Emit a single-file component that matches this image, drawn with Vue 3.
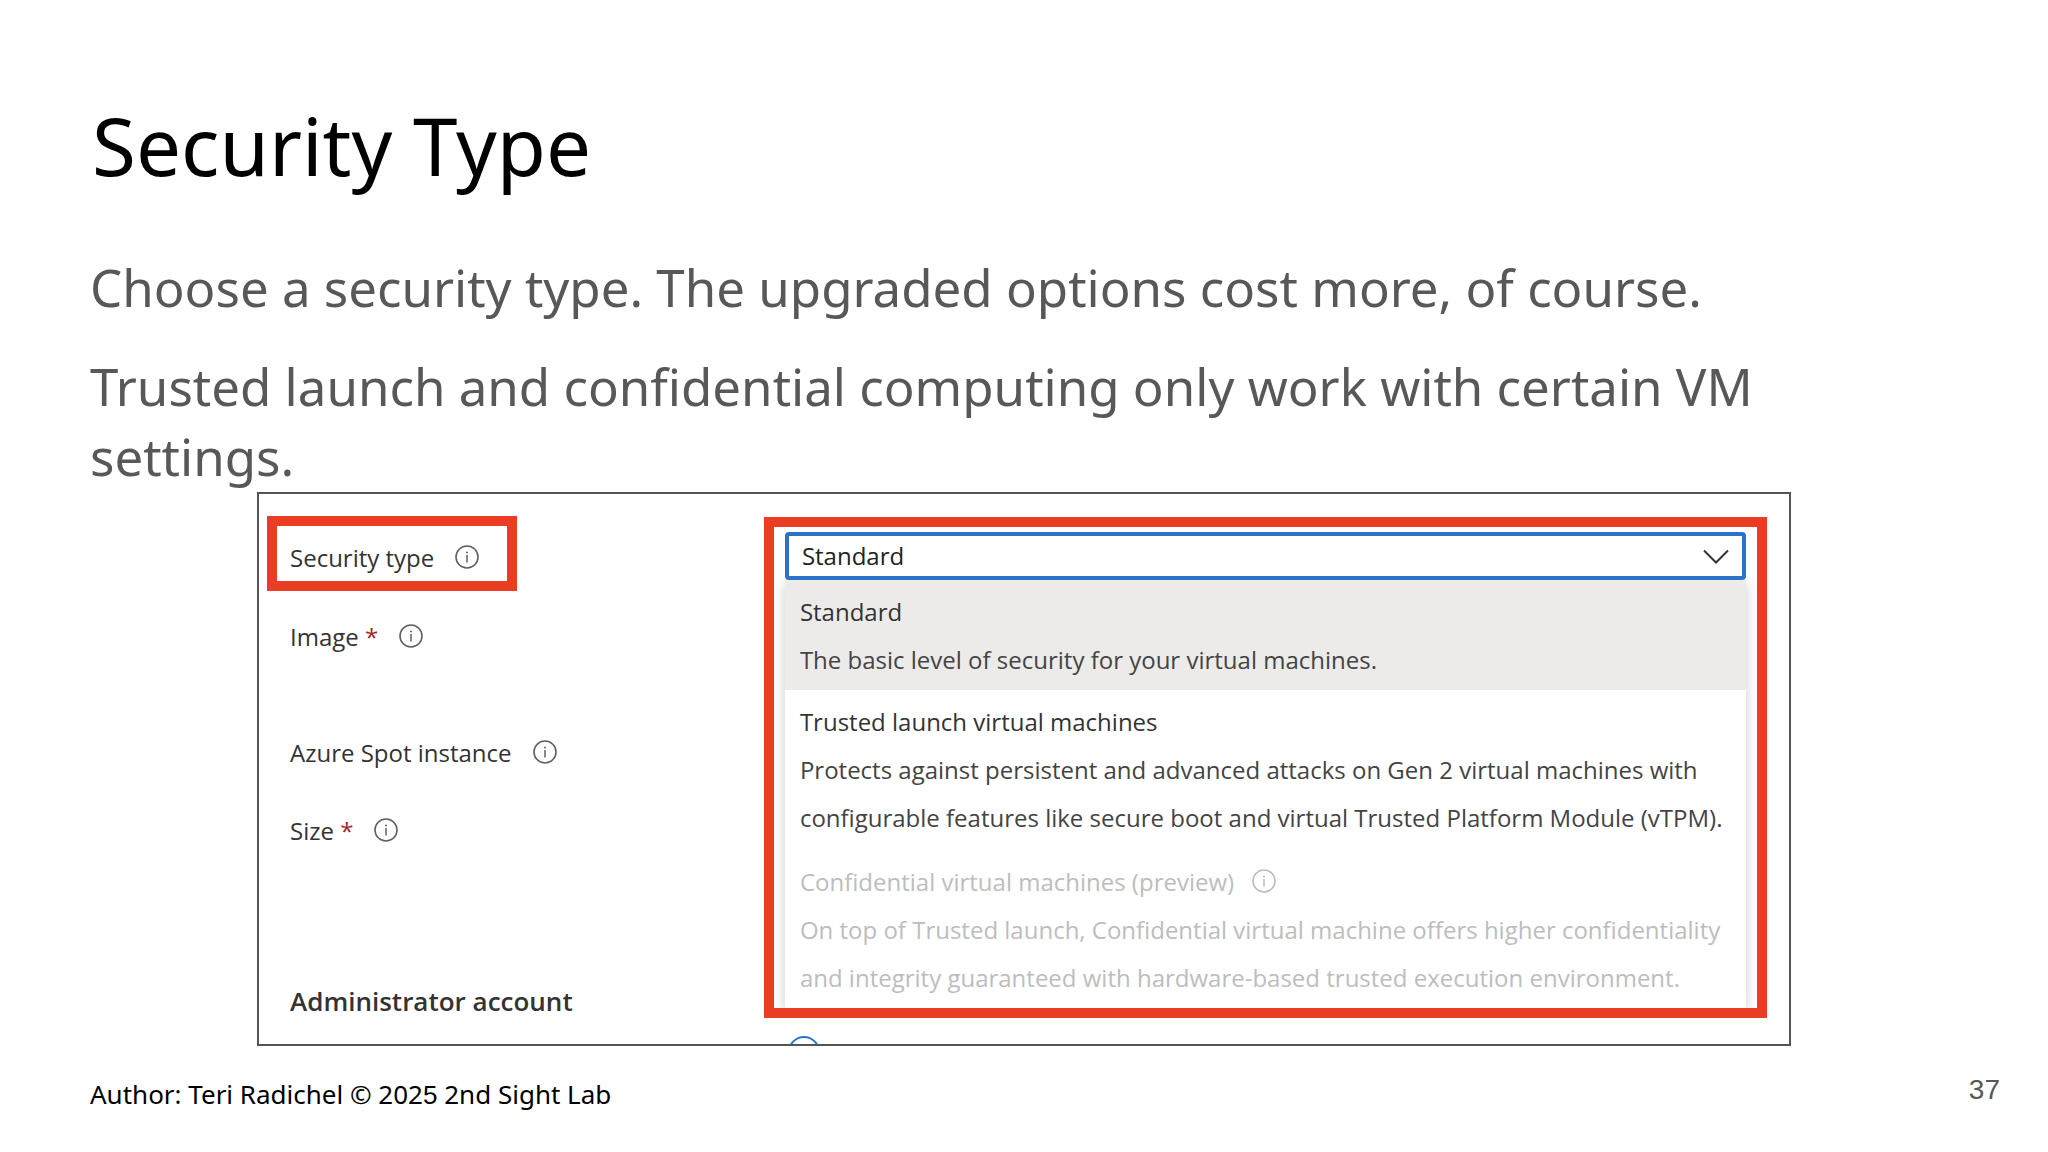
<script setup>
import { h, ref } from 'vue'

const selected = ref('standard')

const options = [
  {
    id: 'standard',
    title: 'Standard',
    lines: ['The basic level of security for your virtual machines.'],
  },
  {
    id: 'trusted',
    title: 'Trusted launch virtual machines',
    lines: [
      'Protects against persistent and advanced attacks on Gen 2 virtual machines with',
      'configurable features like secure boot and virtual Trusted Platform Module (vTPM).',
    ],
  },
  {
    id: 'confidential',
    title: 'Confidential virtual machines (preview)',
    lines: [
      'On top of Trusted launch, Confidential virtual machine offers higher confidentiality',
      'and integrity guaranteed with hardware-based trusted execution environment.',
    ],
    disabled: true,
    info: true,
  },
]

const InfoIcon = () =>
  h('svg', { width: 24, height: 24, viewBox: '0 0 24 24', fill: 'none', 'aria-hidden': 'true' }, [
    h('circle', { cx: 12, cy: 12, r: 11, stroke: 'currentColor', 'stroke-width': 1.6 }),
    h('path', { d: 'M12 10v7.5', stroke: 'currentColor', 'stroke-width': 1.5 }),
    h('circle', { cx: 12, cy: 7.4, r: 1, fill: 'currentColor' }),
  ])
</script>

<template>
  <main class="slide">
    <h1>Security Type</h1>
    <div class="intro">
      <p>Choose a security type. The upgraded options cost more, of course.</p>
      <p>Trusted launch and confidential computing only work with certain VM settings.</p>
    </div>

    <section class="frame">
      <div class="labels">
        <div class="row marked">
          <label for="security-type">Security type</label>
          <InfoIcon class="info" />
        </div>
        <div class="row image">
          <span>Image <b class="req">*</b></span>
          <InfoIcon class="info" />
        </div>
        <div class="row spot">
          <span>Azure Spot instance</span>
          <InfoIcon class="info" />
        </div>
        <div class="row size">
          <span>Size <b class="req">*</b></span>
          <InfoIcon class="info" />
        </div>
        <h2 id="admin-heading">Administrator account</h2>
      </div>

      <div class="fields">
        <div class="picker">
          <div class="select-wrap">
            <select id="security-type" v-model="selected">
              <option v-for="o in options" :key="o.id" :value="o.id" :disabled="o.disabled">
                {{ o.title }}
              </option>
            </select>
            <svg class="chevron" width="26" height="16" viewBox="0 0 26 16" fill="none" aria-hidden="true">
              <path d="M1 2.5 13 14.5 25 2.5" stroke="#333" stroke-width="2" />
            </svg>
          </div>
          <ul class="menu" role="listbox" aria-label="Security type">
            <li
              v-for="o in options"
              :key="o.id"
              role="option"
              :aria-selected="o.id === selected"
              :class="{ active: o.id === selected, disabled: o.disabled }"
            >
              <div class="option-title">
                {{ o.title }}
                <InfoIcon v-if="o.info" class="info" />
              </div>
              <div v-for="line in o.lines" :key="line" class="option-line">{{ line }}</div>
            </li>
          </ul>
        </div>
        <div class="radio-clip">
          <input type="radio" name="auth" aria-labelledby="admin-heading" />
        </div>
      </div>
    </section>

    <footer>
      <span class="author">Author: Teri Radichel © 202<span class="digit">5</span> 2nd Sight Lab</span>
      <span class="page">37</span>
    </footer>
  </main>
</template>

<style>
body {
  background: #fff;
}
</style>

<style scoped>
.slide {
  padding: 97px 48px 0 90px;
  font-family: "Noto Sans", "Open Sans", sans-serif;
  color: #000;
}
h1 {
  margin: 0 0 59px;
  padding-left: 2px;
  font-size: 80px;
  line-height: 96px;
  font-weight: 400;
}
.intro {
  padding-right: 48px;
  color: #585858;
  font-size: 51px;
  line-height: 70px;
}
.intro p {
  margin: 0;
}
.intro p + p {
  margin-top: 29px;
}
.frame {
  display: grid;
  grid-template-columns: 33% minmax(0, 1fr);
  margin: 1px 209px 0 167px;
  border: 2px solid #555;
  font-family: "Open Sans", "Noto Sans", sans-serif;
  font-size: 24px;
  line-height: 32px;
  color: #333;
  overflow: hidden;
}
.labels {
  padding: 22px 0 0 31px;
}
.row {
  display: flex;
  align-items: center;
  gap: 21px;
}
.info {
  flex: none;
  margin-bottom: 2px;
  color: #606060;
}
.marked {
  width: fit-content;
  margin-left: -23px;
  padding: 16px 28px 7px 13px;
  border: 10px solid #eb3d24;
}
.image {
  margin-top: 30px;
}
.spot {
  margin-top: 84px;
}
.size {
  margin-top: 46px;
}
.req {
  color: #a4262c;
  font-weight: 400;
}
h2 {
  margin: 138px 0 0;
  font-size: 26px;
  line-height: 32px;
  font-weight: 600;
}
.fields {
  padding: 23px 22px 0 0;
}
.picker {
  padding: 5px 11px 0;
  border: 10px solid #eb3d24;
  overflow: hidden;
}
.select-wrap {
  display: grid;
  align-items: center;
}
.select-wrap > * {
  grid-area: 1 / 1;
}
select {
  appearance: none;
  width: 100%;
  height: 48px;
  margin: 0;
  padding: 0 13px;
  border: 4px solid #2b73c8;
  border-radius: 4px;
  background: #fff;
  color: #222;
  font: inherit;
  outline: none;
}
.chevron {
  justify-self: end;
  margin-right: 17px;
  pointer-events: none;
}
.menu {
  margin: 0;
  padding: 0;
  list-style: none;
  box-shadow: 0 4px 12px rgba(0, 0, 0, 0.2);
}
.menu li {
  padding: 8px 0 6px 15px;
  line-height: 48px;
  color: #444;
  white-space: nowrap;
}
.menu li.active {
  background: #ecebe9;
}
.menu li.disabled {
  padding-top: 10px;
}
.menu .option-title {
  display: flex;
  align-items: center;
  gap: 18px;
  color: #333;
}
.menu .disabled,
.menu .disabled .option-title,
.menu .disabled .info {
  color: #bdbdbd;
}
.radio-clip {
  height: 8px;
  margin-top: 18px;
  padding-left: 24px;
  overflow: hidden;
}
input[type="radio"] {
  appearance: none;
  display: block;
  width: 32px;
  height: 32px;
  margin: 0;
  border: 2px solid #2b73c8;
  border-radius: 50%;
}
footer {
  display: flex;
  justify-content: space-between;
  padding-top: 27px;
  line-height: 34px;
}
.author {
  padding-top: 4px;
  font-size: 26px;
}
.digit,
.page {
  font-family: "Liberation Sans", sans-serif;
}
.page {
  font-size: 28px;
  color: #585858;
}
</style>
